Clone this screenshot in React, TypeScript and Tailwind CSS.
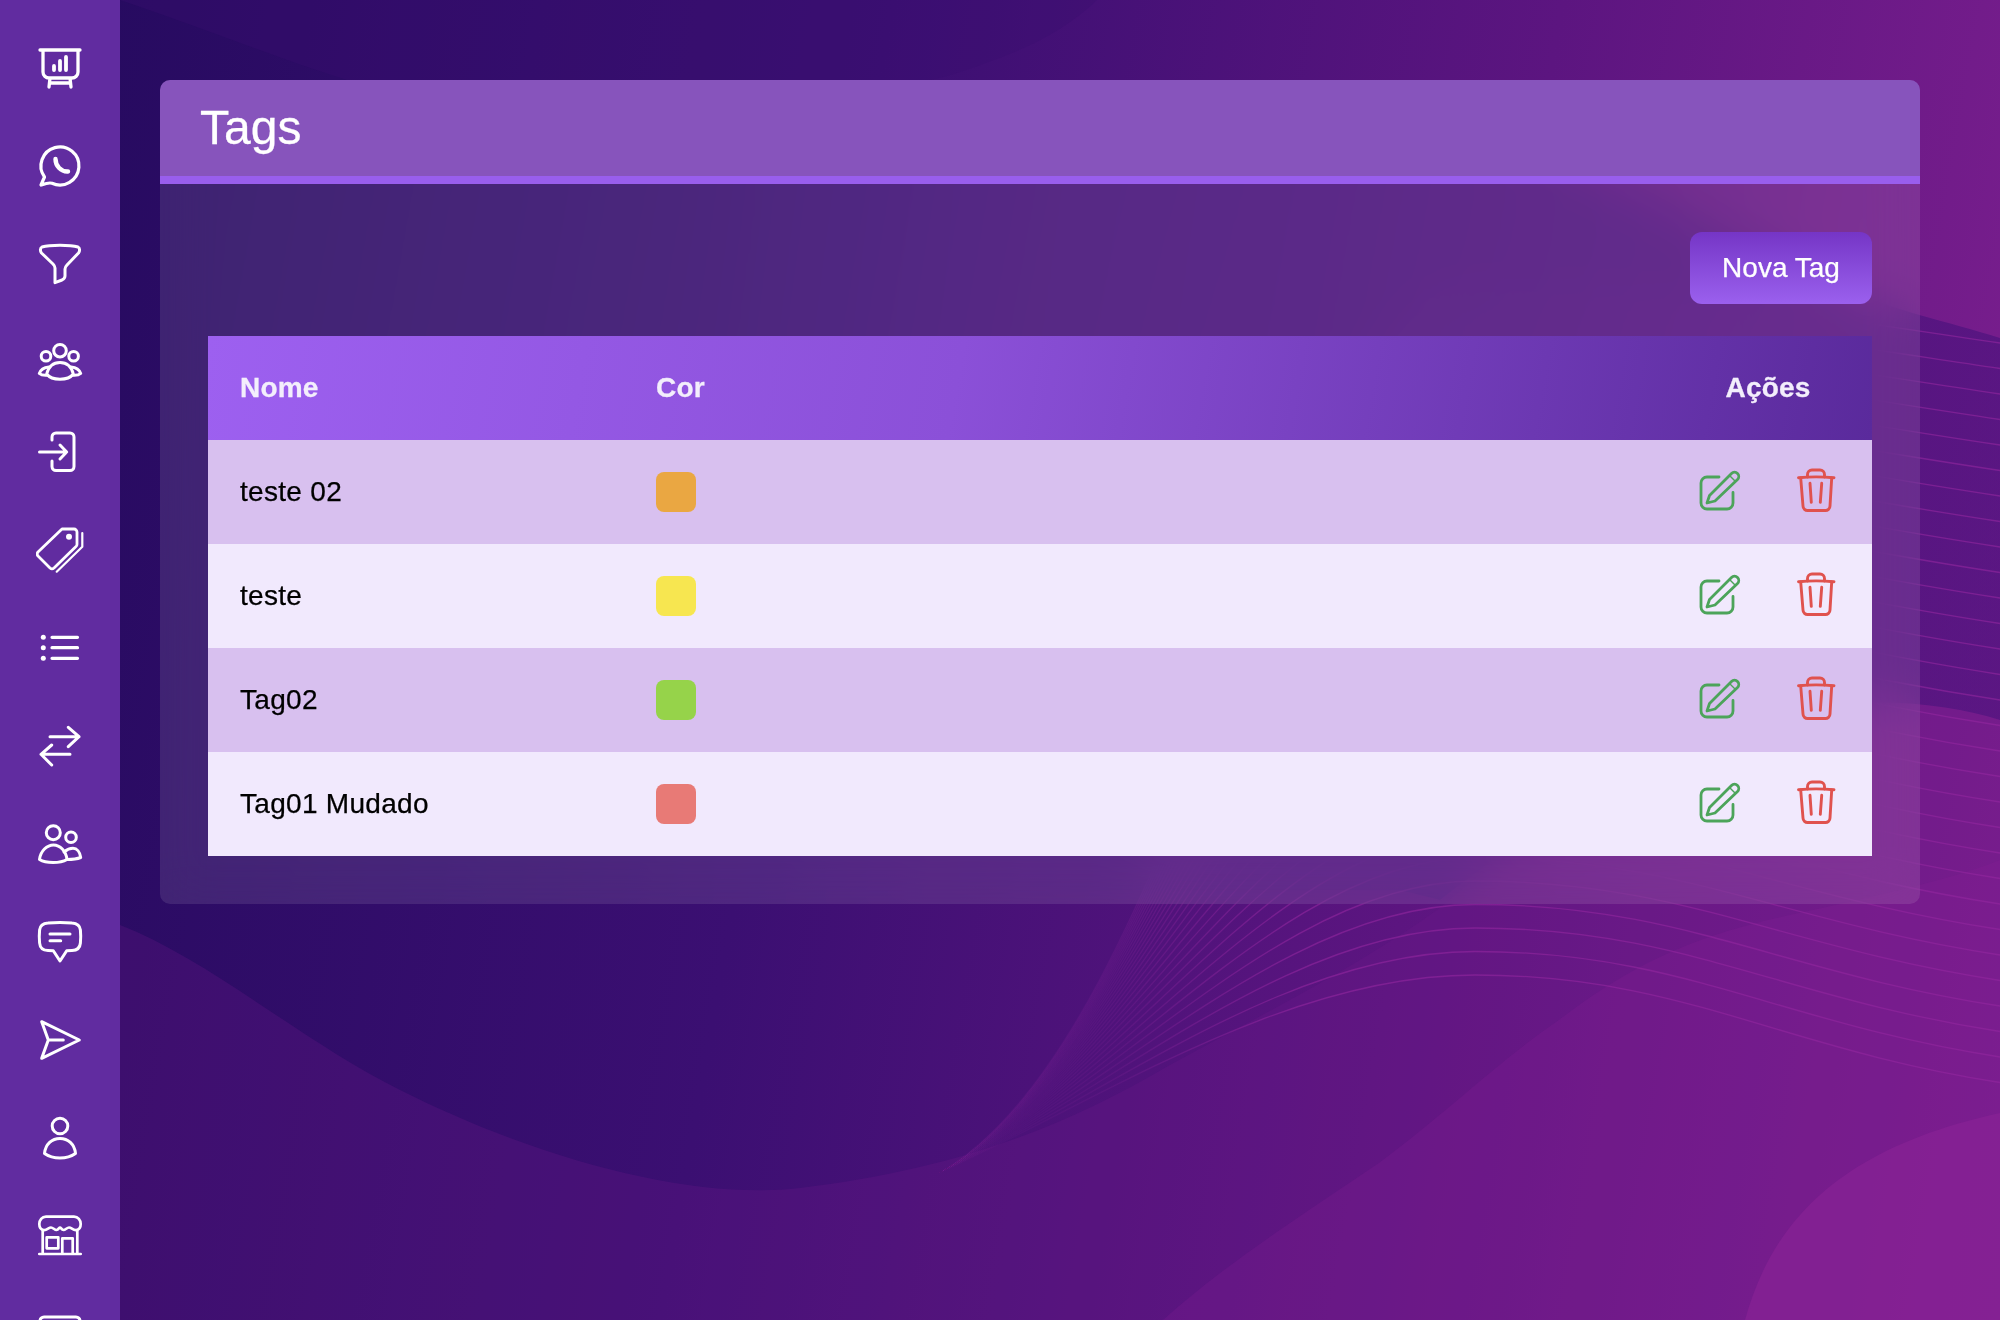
import React from "react";

const S = ({ children, className = "h-12 w-12", w = 3 }: { children: React.ReactNode; className?: string; w?: number }) => (
  <svg viewBox="0 0 48 48" className={className} fill="none" stroke="currentColor" strokeWidth={w} strokeLinecap="round" strokeLinejoin="round">
    {children}
  </svg>
);

const navIcons: { w: number; el: React.ReactNode; cls?: string }[] = [
  { w: 3.3, el: <>
    <path d="M4 6H44M7 6V28a6 6 0 0 0 6 6H36a6 6 0 0 0 6-6V6M14 34L13 43M34 34L35 43M14 39H34" />
    <path d="M18 22V26M24 17V26M30 13V26" strokeWidth={3.8} />
  </> },
  { w: 3.2, el: <>
    <path d="M5 43L8.5 35A19 19 0 1 1 16 41.2C12 40.3 8 42 5 43Z" />
    <path d="M19.5 17C19.5 24 25 30 32 29.5" strokeWidth={4.4} />
  </> },
  { w: 3, el: <path d="M6 7C14 4.5 34 4.5 42 7C44 8 44 11 42.5 13L31 25C29.5 26.5 29 27 29 29V36C29 38 28 39 26 40L19 42.7V28C19 26.5 18 25 17 24L5.5 13C4 11 4 8 6 7Z" /> },
  { w: 3, el: <>
    <circle cx="24" cy="12.7" r="6.3" />
    <circle cx="10" cy="18.3" r="4.8" />
    <circle cx="37.6" cy="18.3" r="4.8" />
    <path d="M10.7 36C13 27 19 24.5 24 24.5C29 24.5 35 27 37.3 36C32 43 16 43 10.7 36Z" />
    <path d="M13 29C8 29.5 4.5 32 3.3 35.5C5 37 8 37.5 11 37.3M35 29C40 29.5 43.5 32 44.7 35.5C43 37 40 37.5 37 37.3" />
  </> },
  { w: 3, cls: "-mt-2", el: <path d="M16 12V9a4 4 0 0 1 4-4H34a4 4 0 0 1 4 4V38.5a4 4 0 0 1-4 4H20a4 4 0 0 1-4-4V33M3.5 24H30.5M24 17L30.7 24L24 31" /> },
  { w: 2.8, el: <>
    <path d="M26 3H38a3 3 0 0 1 3 3V18a3 3 0 0 1-1 2.5L18 42a3 3 0 0 1-4 0L2 30a3 3 0 0 1 0-4Z" />
    <circle cx="33" cy="10.7" r="3" fill="currentColor" stroke="none" />
    <path d="M46.3 7V20.7L20.7 45.7" strokeWidth={2.2} />
  </> },
  { w: 3.2, el: <>
    <path d="M16 13.3H41.5M16 23.7H41.5M16 34.3H41.5" />
    <circle cx="7.3" cy="13.3" r="2.5" fill="currentColor" stroke="none" />
    <circle cx="7.3" cy="23.7" r="2.5" fill="currentColor" stroke="none" />
    <circle cx="7.3" cy="34.3" r="2.5" fill="currentColor" stroke="none" />
  </> },
  { w: 3, el: <path d="M14 14.7H43M32.3 5.3L43 14.7L32.3 24.7M34 32.3H5M15.7 23L5 32.3L15.7 43" /> },
  { w: 3, el: <>
    <circle cx="17.3" cy="12.7" r="7" />
    <circle cx="35" cy="17.3" r="5.3" />
    <path d="M3.5 39.5C4.5 31 11 25 17.5 25C24 25 30 31 31 39.5C24 43.5 10 43.5 3.5 39.5Z" />
    <path d="M28 32C31 29.5 34 28.3 37 28.3C41 28.3 44 32 44.7 37.5C41 39 36 39.5 31 39.5" />
  </> },
  { w: 3, el: <>
    <path d="M12 5C19 4.3 29 4.3 36 5C41.5 5.4 44 8 44.4 12C44.8 16 44.8 21 44.4 25C44 29.8 41 32.4 36 32.6L30.7 32.8L24 43L17.3 32.8L12 32.6C7 32.4 4 29.8 3.6 25C3.2 21 3.2 16 3.6 12C4 8 6.5 5.4 12 5Z" />
    <path d="M14 16H34M14 22.7H24.7" />
  </> },
  { w: 3, el: <path d="M5.7 5.7L43.3 24L5.7 42.3L12.3 24ZM12.3 24H27.3" /> },
  { w: 3, el: <>
    <circle cx="24" cy="12" r="7.8" />
    <path d="M8.5 39.5C9.5 30 16 24.5 24 24.5C32 24.5 38.5 30 39.5 39.5C31 45.5 17 45.5 8.5 39.5Z" />
  </> },
  { w: 2.7, el: <>
    <path d="M10 4.7H38C42 4.7 44.7 8 44.7 12C44.7 15 43 17.5 40.5 18C37 18.5 35.5 15.5 33 15.5C31 15.5 29.5 18 27.5 18C25.5 18 25 15.5 24 15.5C23 15.5 22.5 18 20.5 18C18.5 18 17 15.5 15 15.5C12.5 15.5 11 18.5 7.5 18C5 17.5 3.3 15 3.3 12C3.3 8 6 4.7 10 4.7Z" />
    <path d="M6.7 18V42M41.3 18V42M3.3 42H44.7M26.3 42V26.3H36.7V42" />
    <rect x="10.7" y="25.3" width="11.6" height="11" />
  </> },
  { w: 3, el: <rect x="4" y="7" width="40" height="36" rx="4" /> },
];

const EditIcon = () => (
  <S w={2.8} className="h-12 w-12 text-[#4ca45a]">
    <path d="M23 11H11a6 6 0 0 0-6 6V37a6 6 0 0 0 6 6H31a6 6 0 0 0 6-6V26.5" />
    <path d="M11 37L13.5 29.5L35.5 7.5a4 4 0 0 1 6 6L19 35Z" />
    <path d="M33.5 9.5L39.5 15.5" strokeWidth={1.4} />
  </S>
);

const TrashIcon = () => (
  <S w={2.9} className="h-12 w-12 text-[#e0524e]">
    <path d="M6.5 11.7C18 10.6 30 10.6 42 11.7" />
    <path d="M15.5 11V8.5a4.5 4.5 0 0 1 4.5-4.5H28a4.5 4.5 0 0 1 4.5 4.5V11" />
    <path d="M8.7 12L11 40a4.5 4.5 0 0 0 5 4.5H33a4.5 4.5 0 0 0 5-4.5L39.7 12" />
    <path d="M18 17.3L19.3 36.3M29.7 17.3L28.3 36.3" />
  </S>
);

const rows = [
  { name: "teste 02", color: "bg-[#eaa742]", bg: "bg-[#d8c0ef]" },
  { name: "teste", color: "bg-[#f7e650]", bg: "bg-[#f1e9fd]" },
  { name: "Tag02", color: "bg-[#96d34a]", bg: "bg-[#d8c0ef]" },
  { name: "Tag01 Mudado", color: "bg-[#e87a76]", bg: "bg-[#f1e9fd]" },
];

const waveLines = Array.from({ length: 30 }, (_, i) => {
  const peakY = 975 - 23.5 * i;
  const endY = 1080 - 25.5 * i;
  const peakX = 1475;
  return `M935 1175C${1100 + i * 3} ${1100 - 2 * i} ${peakX - 190} ${peakY} ${peakX} ${peakY}C${peakX + 210} ${peakY} 1780 ${endY - 30} 2010 ${endY + 4}`;
});

const Background = () => (
  <svg viewBox="0 0 2000 1320" className="absolute inset-0 h-full w-full" preserveAspectRatio="none">
    <defs>
      <linearGradient id="darkWave" gradientUnits="userSpaceOnUse" x1="700" y1="0" x2="1250" y2="0">
        <stop offset="0" stopColor="#42107a" stopOpacity="0" />
        <stop offset="1" stopColor="#42107a" stopOpacity="0.55" />
      </linearGradient>
      <linearGradient id="lineFade" gradientUnits="userSpaceOnUse" x1="935" y1="0" x2="1300" y2="0">
        <stop offset="0" stopColor="#93269f" stopOpacity="0" />
        <stop offset="0.5" stopColor="#93269f" stopOpacity="0.16" />
        <stop offset="1" stopColor="#93269f" stopOpacity="0.6" />
      </linearGradient>
    </defs>
    <path d="M120 925C210 960 300 1040 400 1090C550 1165 700 1200 800 1188C950 1170 1060 1130 1170 1065C1280 1005 1360 965 1440 908C1530 830 1650 745 1800 710C1880 695 1950 705 2000 720V1320H120Z" fill="#6a1a88" fillOpacity="0.28" />
    <path d="M700 92H1300C1400 100 1530 150 1612 184C1700 215 1780 260 1829 283C1890 310 1950 322 2000 338V720C1950 705 1880 695 1800 710C1650 745 1530 830 1440 900L1400 890H700Z" fill="url(#darkWave)" />
    <path d="M1163 1320C1230 1260 1310 1210 1379 1163C1450 1110 1500 1060 1559 1020C1650 950 1720 930 1799 913C1880 895 1950 880 2000 860V1320Z" fill="#8a2298" fillOpacity="0.22" />
    <path d="M1745 1320C1770 1230 1830 1150 2000 1113V1320Z" fill="#8a2396" fillOpacity="0.6" />
    <path d="M1097 0C1060 35 1020 52 960 72C880 98 780 90 700 110C500 160 300 60 120 0Z" fill="#3a0f70" fillOpacity="0.35" />
    {waveLines.map((d, i) => (
      <path key={i} d={d} fill="none" stroke="url(#lineFade)" strokeWidth="1.3" />
    ))}
  </svg>
);

export default function App() {
  return (
    <div className="relative flex h-[1320px] w-full overflow-hidden bg-[linear-gradient(100deg,#240a5e_0%,#3b0f72_40%,#5c1580_70%,#7f2090_100%)] font-['Liberation_Sans',Arial,sans-serif]">
      <Background />
      <aside className="relative flex h-[1320px] w-[120px] shrink-0 flex-col items-center gap-[50px] overflow-hidden bg-[#612ca0] pt-[44px] text-white">
        {navIcons.map((ic, i) => (
          <div key={i} className={`h-12 w-12 shrink-0 ${ic.cls ?? ""}`}>
            <S w={ic.w}>{ic.el}</S>
          </div>
        ))}
      </aside>
      <main className="relative flex-1 pt-20 pl-10 pr-20">
        <section className="overflow-hidden rounded-[10px] bg-white/10 backdrop-blur-xl">
          <header className="flex h-[104px] items-start border-b-8 border-[#995eed] bg-[#8754bc] px-10 pt-5">
            <h1 className="text-[48px] leading-[56px] font-normal text-white [-webkit-text-stroke:0.3px]">Tags</h1>
          </header>
          <div className="p-12">
            <div className="flex justify-end">
              <button className="h-[72px] w-[182px] rounded-xl bg-gradient-to-b from-[#7535c6] to-[#9b60ee] text-[28px] text-white [-webkit-text-stroke:0.25px]">Nova Tag</button>
            </div>
            <div className="mt-8">
              <div className="grid h-[104px] grid-cols-[448px_1fr_176px] items-center bg-[linear-gradient(100deg,#9d60f0_0%,#8b50d8_45%,#5a2a9c_100%)] text-[28px] font-bold tracking-[0.2px] text-[#f3eefc] [-webkit-text-stroke:0.3px]">
                <div className="pl-8">Nome</div>
                <div>Cor</div>
                <div className="pr-8 text-center">Ações</div>
              </div>
              {rows.map((r) => (
                <div key={r.name} className={`grid h-[104px] grid-cols-[448px_1fr_176px] items-center ${r.bg} text-[28px] tracking-[0.3px] text-black [-webkit-text-stroke:0.25px]`}>
                  <div className="pl-8">{r.name}</div>
                  <div>
                    <div className={`h-10 w-10 rounded-lg ${r.color}`} />
                  </div>
                  <div className="-mt-1 flex justify-between pr-8">
                    <EditIcon />
                    <TrashIcon />
                  </div>
                </div>
              ))}
            </div>
          </div>
        </section>
      </main>
    </div>
  );
}
